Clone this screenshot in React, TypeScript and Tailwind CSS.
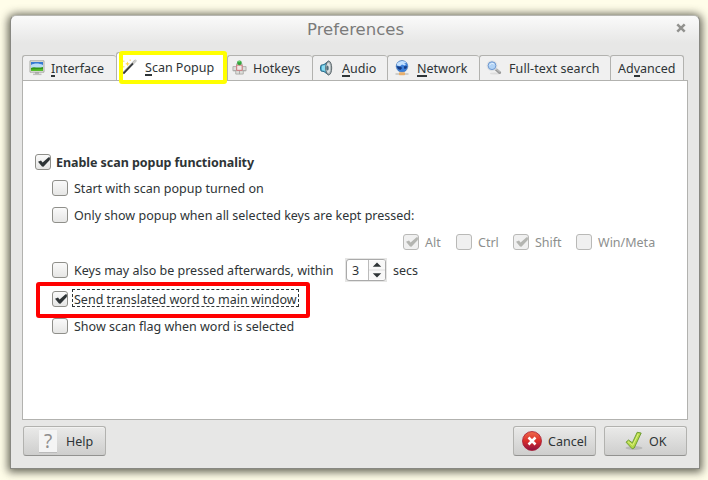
import React from 'react';

function Check({ checked = false, disabled = false }: { checked?: boolean; disabled?: boolean }) {
  return (
    <span
      className={
        disabled
          ? 'relative block size-4 shrink-0 rounded-[3px] border border-[#b9b9b7] bg-[#f0f0f0]'
          : 'relative block size-4 shrink-0 rounded-[3px] border border-[#8f8f8a] bg-linear-to-b from-[#fafafa] to-[#e6e6e5]'
      }
    >
      {checked && (
        <svg className="absolute -top-px -left-px size-4" viewBox="0 0 16 16">
          <path d="M3 7.8 6 6.6 7.6 8.6 13.6 3.3 15 3.4 14.8 6 8.4 12.8 7 12.6Z" fill={disabled ? '#b4b5b1' : '#2e3436'} />
        </svg>
      )}
    </span>
  );
}

function Monitor() {
  return (
    <svg className="size-4 shrink-0" viewBox="0 0 16 16">
      <path d="M1 .8h14v11.4H1Z" fill="#e5e5df" stroke="#a9aaa5" />
      <path d="M2 2h12v9H2Z" fill="#3579d2" />
      <path d="M2 5c3-2 8-2 12 0v3H2Z" fill="#b9dcf7" />
      <path d="M2 8C5 6 8 8.5 14 7v4H2Z" fill="#329719" />
      <path d="M2 9.5 14 9v2H2Z" fill="#56bd2e" />
      <path d="M6 12.6h4v1H6z" fill="#888" />
      <path d="M4 13.6h8.5v1.5H4z" fill="#c0c1bd" />
    </svg>
  );
}

function Wand() {
  return (
    <svg className="size-4 shrink-0" viewBox="0 0 16 16">
      <path d="m1 14.5 12.5-13" stroke="#999" strokeWidth="2.5" />
      <path d="m1.5 14.5 9.5-10" stroke="#34383b" strokeWidth="1.7" />
      <path d="m11 4.3 3.3-3.3" stroke="#cfcfcb" strokeWidth="2" />
      <path d="m5.5 2.5.8 1.7 1.7.5-1.7.8-.7 1.7-.8-1.7-1.7-.6 1.7-.8Z" fill="#ffd45a" />
      <path d="M1 1.5h1.5V3H1zM7.5.5H9V2H7.5zM1 7h1.5v1.5H1z" fill="#f8dfa0" />
    </svg>
  );
}

function Keys() {
  return (
    <svg className="size-[15px] shrink-0" viewBox="0 0 16 16">
      <path d="M4.8 4h6v3H15v4.5h-3V15H4v-3.5H1V7h3.8Z" fill="#dededb" stroke="#a8a8a5" strokeWidth=".9" />
      <path d="M1.5 11.3h13M4.8 7.2v4M10.8 7.2v4M8 11.3V15" stroke="#a2a2a0" strokeWidth=".9" />
      <path d="M5 5.5h5.8v5.5H5Z" fill="#eee9e7" stroke="#cf7378" />
      <circle cx="7.9" cy="3" r="2.5" fill="#31a33a" />
      <path d="M6.5 1.8H9" stroke="#7ae57d" />
    </svg>
  );
}

function Speaker() {
  return (
    <svg className="size-4 shrink-0" viewBox="0 0 16 16">
      <path d="M2 5.2 5 4.6 9.5 1v14L5 11.6 2 11Q.8 8 2 5.2Z" fill="#4caed2" stroke="#286c8b" />
      <path d="M3 5.8 6.5 5v6L3 10.2Z" fill="#8adcf2" />
      <ellipse cx="9.7" cy="8" rx="3" ry="6.9" fill="#a9b2b5" stroke="#606b70" />
      <ellipse cx="9.4" cy="8" rx="1.8" ry="4.9" fill="#dce1e2" />
      <ellipse cx="8.5" cy="8" rx="1.2" ry="2.5" fill="#526c78" />
    </svg>
  );
}

function Globe() {
  return (
    <svg className="size-4 shrink-0" viewBox="0 0 16 16">
      <circle cx="8" cy="6.3" r="5.8" fill="#3c80db" stroke="#4373ac" strokeWidth=".6" />
      <path d="M3 3.5C5 .2 11 .2 12.5 3L10 3.5l2 1-1.5 1L8 4.6l-2 1.7-3-.8Z" fill="#c3e1ff" />
      <path d="m2.6 6.2 4.6.5L8 8.3 6.3 10 4 9Zm7.2 0 3.4.1-.8 2.1-2 .6Z" fill="#153b83" />
      <path d="M1.5 14h13" stroke="#c4c4c1" strokeWidth="1.5" />
      <rect x="5" y="12.2" width="6" height="3" rx=".7" fill="#e7b06f" />
    </svg>
  );
}

function Lens() {
  return (
    <svg className="size-4 shrink-0" viewBox="0 0 16 16">
      <ellipse cx="9" cy="13.4" rx="5" ry="1" fill="#ddd" />
      <path d="m9.5 9 4.2 3.6" stroke="#989999" strokeWidth="2.8" strokeLinecap="round" />
      <path d="m10 8.8 3.8 3.2" stroke="#c8c9ca" strokeWidth="1" />
      <circle cx="6" cy="5.7" r="4.3" fill="#a9cdf3" stroke="#dfe2e5" strokeWidth="2.3" />
      <circle cx="6" cy="5.7" r="3.9" fill="#b1d3f6" stroke="#6f98d0" strokeWidth="1" />
      <path d="M3.7 5.3c.5-2 3-2.6 4.5-1" stroke="#e4f2ff" fill="none" />
    </svg>
  );
}

function Tab({ width, icon, children, last = false, pad = 'gap-[6px] pl-[6px]' }: { width: string; icon?: React.ReactNode; children: React.ReactNode; last?: boolean; pad?: string }) {
  return (
    <div
      className={`${width} ${pad} ${last ? 'border-r' : ''} flex h-[25px] shrink-0 items-start rounded-t-[3px] border-t border-l border-[#b2b2af] bg-[#f0f0f0] pt-[4px] whitespace-nowrap`}
    >
      {icon}
      <span>{children}</span>
    </div>
  );
}

const U = ({ children }: { children: string }) => <span className="inline-block h-[17px] border-b-2 border-[#2e3436] leading-[17px]">{children}</span>;

const buttonClass =
  'flex h-[30px] items-center rounded-[3px] border border-[#b2b2af] border-b-[#929290] bg-linear-to-b from-[#eaeae9] to-[#cececd] shadow-[inset_0_1px_0_#f2f2f1]';

export default function App() {
  return (
    <div className="h-[480px] w-[708px] overflow-hidden bg-[#fffde9] pt-[15px] pl-[10px] font-['Noto_Sans',sans-serif] text-[12.5px] leading-[18px] text-[#2e3436]">
      <div className="flex h-[454px] w-[690px] flex-col rounded-t-[6px] border border-[#888882] border-t-[#b6b6b1] bg-[#e7e7e6] bg-[linear-gradient(#fafafa,#e7e7e6_27px)] px-[11px] shadow-[0_1px_8px_2px_rgba(45,45,35,0.75)]">
        <header className="relative h-9 shrink-0 text-center">
          <h1 className="pt-[4px] pl-[1px] font-['DejaVu_Sans',sans-serif] text-[16.5px] leading-[19px] text-[#7b7b7a]">Preferences</h1>
          <svg className="absolute top-[7px] right-[2px] size-[10px]" viewBox="0 0 10 10">
            <path d="m1.3 1.3 7.4 7.4m0-7.4-7.4 7.4" stroke="#92928f" strokeWidth="2.5" />
          </svg>
        </header>

        <nav className="relative flex h-[28px] shrink-0 items-end">
          <Tab width="w-[94px]" icon={<Monitor />}><U>I</U>nterface</Tab>
          <div className="relative flex h-[28px] w-[111px] shrink-0 items-start gap-[7px] rounded-t-[3px] border-t border-l border-[#b2b2af] bg-white pt-[6px] pl-[5px] whitespace-nowrap">
            <Wand /><span>
              <U>S</U>can Popup</span>
            <div className="absolute -top-[2px] left-[2px] z-10 h-[33px] w-[108px] rounded-[3px] border-4 border-[#ffff00]" />
          </div>
          <Tab width="w-[85px]" pad="gap-[6px] pl-[4px]" icon={<Keys />}>Hotkeys</Tab>
          <Tab width="w-[75px]" pad="gap-[7px] pl-[6px]" icon={<Speaker />}><U>A</U>udio</Tab>
          <Tab width="w-[92px]" pad="gap-[7px] pl-[6px]" icon={<Globe />}><U>N</U>etwork</Tab>
          <Tab width="w-[131px]" pad="gap-[7px] pl-[6px] tracking-[0.1px]" icon={<Lens />}>Full-text search</Tab>
          <Tab width="w-[74px]" pad="pl-[7px]" last>Ad<U>v</U>anced</Tab>
        </nav>

        <main className="h-[340px] w-[666px] shrink-0 border border-[#b2b2af] bg-white pt-[73px] pl-[12px]">
          <div className="flex h-4 items-center gap-[5px] font-bold">
            <Check checked /><span className="pt-[2px] tracking-[-0.05px]">Enable scan popup functionality</span>
          </div>
          <div className="mt-[10px] ml-[17px] flex h-4 items-center gap-[6px]">
            <Check /><span className="pt-[2px]">Start with scan popup turned on</span>
          </div>
          <div className="mt-[11px] ml-[17px] flex h-4 items-center gap-[6px]">
            <Check /><span className="pt-[2px]">Only show popup when all selected keys are kept pressed:</span>
          </div>
          <div className="mt-[11px] ml-[368px] flex h-4 items-center text-[#8d8f8e]">
            <div className="flex w-[53px] items-center gap-[6px]"><Check checked disabled /><span className="pt-[2px]">Alt</span></div>
            <div className="flex w-[57px] items-center gap-[6px]"><Check disabled /><span className="pt-[2px]">Ctrl</span></div>
            <div className="flex w-[63px] items-center gap-[6px]"><Check checked disabled /><span className="pt-[2px]">Shift</span></div>
            <div className="flex items-center gap-[6px]"><Check disabled /><span className="pt-[2px]">Win/Meta</span></div>
          </div>
          <div className="mt-[8px] ml-[17px] flex h-6 items-center">
            <Check />
            <span className="ml-[6px] w-[271px] pt-[2px] whitespace-nowrap">Keys may also be pressed afterwards, within</span>
            <div className="flex h-6 w-[42px] bg-[#e6e6e5] p-px">
              <div className="flex w-full rounded-[3px] border border-[#aaa] bg-white">
                <span className="w-[21px] pl-[5px] leading-[22px]">3</span>
                <svg className="h-5 w-[17px] border-l border-[#bbb]" viewBox="0 0 17 20">
                  <path d="M0 0h17v20H0z" fill="#f8f8f8" /><path d="M0 10h17" stroke="#ddd" />
                  <path d="m4 6.5 4.5-4.5 4.5 4.5Zm0 7 4.5 4.5 4.5-4.5Z" fill="#2e3436" />
                </svg>
              </div>
            </div>
            <span className="ml-[6px] pt-[2px]">secs</span>
          </div>
          <div className="relative mt-[7px] ml-[17px] flex h-5 items-start">
            <div className="pt-[2px]"><Check checked /></div>
            <span className="ml-[4px] h-[18px] w-[227px] border border-dashed border-[#2e3436] pl-px leading-[19px] whitespace-nowrap">Send translated word to main window</span>
            <div className="absolute -top-[7px] -left-[16px] h-[36px] w-[274px] rounded-[3px] border-4 border-[#ff0000]" />
          </div>
          <div className="mt-[9px] ml-[17px] flex h-4 items-center gap-[6px]">
            <Check /><span className="pt-[2px]">Show scan flag when word is selected</span>
          </div>
        </main>

        <footer className="mt-[6px] flex h-[30px] w-[665px] pl-px">
          <button className={`${buttonClass} w-[83px] pl-[15px]`}>
            <span className="h-[23px] w-[18px] border-b border-[#bbb] bg-[#f4f4f4] font-['Noto_Sans',sans-serif] text-[19px] leading-[22px] text-[#8f8f8f]">?</span>
            <span className="ml-[9px] pt-[2px]">Help</span>
          </button>
          <button className={`${buttonClass} ml-auto w-[83px] pl-[8px]`}>
            <svg className="size-5" viewBox="0 0 20 20">
              <defs><linearGradient id="red" x2="0" y2="1"><stop stopColor="#ef6a4c" /><stop offset=".5" stopColor="#da2e2a" /><stop offset="1" stopColor="#8b1142" /></linearGradient></defs>
              <circle cx="10" cy="10" r="9.5" fill="url(#red)" stroke="#a61931" strokeWidth=".8" />
              <path d="m6.5 6.5 7 7m0-7-7 7" stroke="white" strokeWidth="2.5" />
            </svg>
            <span className="ml-[6px] pt-[2px]">Cancel</span>
          </button>
          <button className={`${buttonClass} ml-[8px] w-[83px] pl-[19px]`}>
            <svg className="size-5" viewBox="0 0 20 20">
              <ellipse cx="10" cy="17" rx="8.5" ry="1.9" fill="#b9b9b9" />
              <path d="m2 11.2 2.5-2.2 3.8 2.8L13.2 1.3 17.2 2 10.2 17l-2 .8Z" fill="#b5d948" stroke="#66962c" strokeWidth=".9" />
              <path d="m4 10.7 4.7 3.6 5.7-11.5" fill="none" stroke="#ddf083" />
            </svg>
            <span className="ml-[5px] pt-[2px]">OK</span>
          </button>
        </footer>
      </div>
    </div>
  );
}
